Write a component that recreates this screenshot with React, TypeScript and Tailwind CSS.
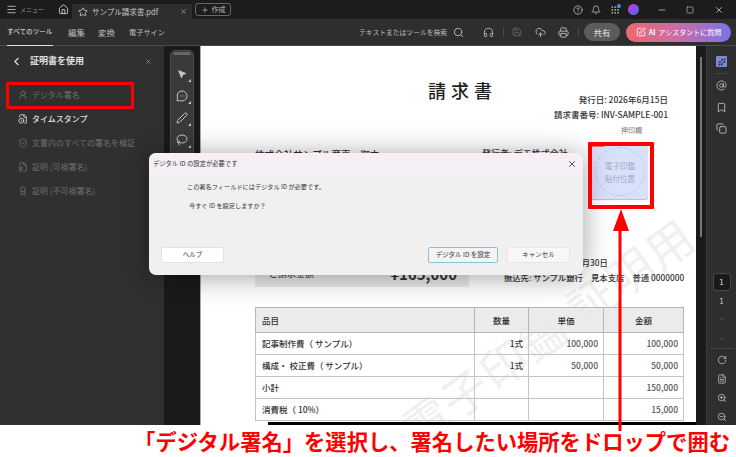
import React from 'react';
import {
  Bell, Bookmark, ChevronDown, ChevronLeft, ChevronUp, CircleHelp, Copy, FileBadge, FileClock, FileText, Grip,
  Headphones, Home, Lasso, Menu, MessageCircleMore, Minus, MousePointer2, Pen, Plus, Printer, RotateCw, Save,
  Search, ShieldCheck, Sparkles, Square, SquarePen, Star, CloudUpload, Award, AtSign, UserRound, X, ZoomIn, ZoomOut,
} from 'lucide-react';

const sidebarItems = [
  { label: 'デジタル署名', icon: UserRound, active: false },
  { label: 'タイムスタンプ', icon: FileClock, active: true },
  { label: '文書内のすべての署名を検証', icon: ShieldCheck, active: false },
  { label: '証明 (可視署名)', icon: FileBadge, active: false },
  { label: '証明 (不可視署名)', icon: Award, active: false },
];

const floatingTools = [MousePointer2, MessageCircleMore, Pen, Lasso];

const rows = [
  { name: '記事制作費（ サンプル）', qty: '1式', price: '100,000', total: '100,000' },
  { name: '構成・ 校正費（ サンプル）', qty: '1式', price: '50,000', total: '50,000' },
  { name: '小計', qty: '', price: '', total: '150,000' },
  { name: '消費税（ 10%）', qty: '', price: '', total: '15,000' },
];

const TitleBar = () => (
  <div className="flex h-[19px] shrink-0 items-end bg-[#1c1c1c] text-[#b9b9b9]">
    <div className="flex h-[19px] w-[72px] items-center">
      <Menu className="ml-[6px] h-[11px] w-[11px]" />
      <span className="ml-[3px] whitespace-nowrap text-[6px] text-[#9a9a9a]">メニュー</span>
      <Home className="ml-[14px] h-[11px] w-[11px] text-[#d0d0d0]" />
    </div>
    <div className="flex h-[15px] w-[120px] items-center bg-[#2e2e2e] text-[#c8c8c8]">
      <Star className="ml-[6px] h-[10px] w-[10px]" />
      <span className="ml-[4px] whitespace-nowrap text-[7.5px]">サンプル請求書.pdf</span>
      <X className="ml-auto mr-[5px] h-[7px] w-[7px]" />
    </div>
    <div className="mb-[3px] ml-[3px] flex h-[13px] w-[36px] items-center justify-center gap-[3px] rounded-[3px] border border-[#666] text-[7px]">
      <Plus className="h-[8px] w-[8px]" />
      作成
    </div>
    <div className="ml-auto flex h-[19px] items-center pr-[12px]">
      <CircleHelp className="h-[10px] w-[10px]" />
      <Bell className="ml-[8px] h-[10px] w-[10px]" />
      <span className="relative ml-[9px]">
        <Grip className="h-[10px] w-[10px]" />
        <span className="absolute -right-[1px] -top-[1px] h-[4px] w-[4px] rounded-full bg-[#2f8ff0]" />
      </span>
      <span className="ml-[8px] h-[11px] w-[11px] rounded-full bg-[linear-gradient(135deg,#d23ad0,#3a6cf0)]" />
      <Minus className="ml-[18px] h-[10px] w-[10px]" />
      <Square className="ml-[19px] h-[8px] w-[8px]" />
      <X className="ml-[20px] h-[10px] w-[10px]" />
    </div>
  </div>
);

const ToolBar = () => (
  <div className="flex h-[27px] shrink-0 items-center whitespace-nowrap border-b border-[#4a4a4a] bg-[#2e2e2e] text-[8.5px] text-[#bdbdbd]">
    <div className="relative ml-[7px] flex h-full w-[46px] items-center text-[6.6px] text-[#e8e8e8]">
      すべてのツール
      <span className="absolute bottom-[-1px] left-0 right-0 h-[1px] bg-[#e0e0e0]" />
    </div>
    <span className="ml-[15px] w-[17px]">編集</span>
    <span className="ml-[13px] w-[17px]">変換</span>
    <span className="ml-[14px] w-[36px] text-[7.2px]">電子サイン</span>
    <span className="ml-[194px] w-[89px] text-[6.8px]">テキストまたはツールを検索</span>
    <Search className="ml-[5px] h-[11px] w-[11px]" />
    <Headphones className="ml-[19px] h-[11px] w-[11px]" />
    <span className="ml-[9px] h-[10px] w-px bg-[#4a4a4a]" />
    <Save className="ml-[8px] h-[10px] w-[10px] text-[#666]" />
    <CloudUpload className="ml-[13px] h-[11px] w-[11px]" />
    <Printer className="ml-[12px] h-[11px] w-[11px]" />
    <span className="ml-[9px] h-[10px] w-px bg-[#4a4a4a]" />
    <span className="ml-[5px] flex h-[18px] w-[36px] items-center justify-center rounded-full bg-[#5c5c5c] text-[#e0e0e0]">共有</span>
    <span className="ml-[6px] flex h-[19px] w-[105px] items-center justify-center gap-[3px] rounded-full bg-[linear-gradient(90deg,#ef6670,#c86ea8,#7a72e6)] text-[7px] text-white">
      <SquarePen className="h-[10px] w-[10px]" />
      <b>AI</b> アシスタントに質問
    </span>
  </div>
);

const Sidebar = () => (
  <aside className="flex w-[164px] shrink-0 flex-col bg-[#303030]">
    <div className="flex h-[30px] shrink-0 items-center text-[#e2e2e2]">
      <ChevronLeft className="ml-[10px] h-[13px] w-[13px]" />
      <span className="ml-[7px] text-[9px] font-bold">証明書を使用</span>
      <X className="ml-auto mr-[12px] h-[7px] w-[7px] text-[#aaa]" />
    </div>
    <ul className="mt-[7px] flex flex-col">
      {sidebarItems.map(({ label, icon: Icon, active }) => (
        <li
          key={label}
          className={`flex h-[24px] items-center whitespace-nowrap pl-[18px] text-[8px] ${active ? 'font-medium text-[#dcdcdc]' : 'text-[#6e6e6e]'}`}
        >
          <Icon className="h-[10px] w-[10px] shrink-0" />
          <span className="ml-[4px]">{label}</span>
        </li>
      ))}
    </ul>
  </aside>
);

const FloatingTools = () => (
  <div className="flex w-[36px] shrink-0 justify-center bg-[#1a1a1a] pt-[4px]">
    <div className="flex h-[180px] w-[24px] flex-col items-center gap-[10px] rounded-[5px] border border-[#4c4c4c] bg-[#3a3a3a] pt-[1px] text-[#c9c9c9]">
      <span className="mb-[3px] h-[3px] w-[18px] rounded-sm bg-[#666]" />
      {floatingTools.map((Icon, i) => (
        <span key={i} className="relative flex h-[12px] w-[12px] items-center justify-center">
          <Icon className={i === 0 ? 'h-[10px] w-[10px] fill-[#c9c9c9]' : 'h-[12px] w-[12px]'} />
          <span className="absolute -bottom-[2px] -right-[3px] h-0 w-0 border-b-[3px] border-l-[3px] border-b-[#c9c9c9] border-l-transparent" />
        </span>
      ))}
    </div>
  </div>
);

const RightRail = () => (
  <div className="flex w-[30px] shrink-0 flex-col items-center border-l border-[#3c3c3c] bg-[#2e2e2e] text-[#b8b8b8]">
    <span className="mt-[10px] flex h-[11px] w-[11px] items-center justify-center rounded-[1px] bg-[#7f89d8]">
      <Sparkles className="h-[8px] w-[8px] text-[#20243c]" />
    </span>
    <span className="mt-[6px] h-px w-[14px] bg-[#444]" />
    <AtSign className="mt-[6px] h-[11px] w-[11px]" />
    <Bookmark className="mt-[11px] h-[11px] w-[11px]" />
    <Copy className="mt-[10px] h-[11px] w-[11px]" />
    <span className="mt-[139px] flex h-[18px] w-[18px] items-center justify-center rounded-[3px] border border-[#4a4a4a] bg-[#1a1a1a] text-[8px] text-[#ddd]">1</span>
    <span className="mt-[4px] text-[8px] leading-[12px] text-[#ccc]">1</span>
    <ChevronUp className="mt-[8px] h-[8px] w-[8px] text-[#666]" />
    <ChevronDown className="mt-[12px] h-[8px] w-[8px] text-[#666]" />
    <span className="mt-[5px] h-px w-[24px] bg-[#444]" />
    <RotateCw className="mt-[6px] h-[10px] w-[10px]" />
    <FileText className="mt-[9px] h-[10px] w-[10px]" />
    <ZoomIn className="mt-[9px] h-[10px] w-[10px]" />
    <ZoomOut className="mt-[9px] h-[10px] w-[10px]" />
  </div>
);

const Watermark = () => (
  <div className="absolute left-[172px] top-[250px] origin-center -rotate-[36deg] whitespace-nowrap text-[46px] tracking-[2px] text-[#f0f0f0]">
    電子印鑑 証明用
  </div>
);

const Invoice = () => (
  <div className="relative flex-1 overflow-hidden border-l border-[#aaa] bg-white pl-[54px] pr-[12px] pt-[34px] text-[#333]">
    <Watermark />
    <div className="relative grid">
      <h1 className="col-start-1 row-start-1 justify-self-center pr-[14px] text-[18px] font-medium leading-[20px] tracking-[5px] text-[#222]">請求書</h1>
      <div className="col-start-1 row-start-1 mt-[12px] justify-self-end pr-[16px] text-right text-[8.5px] font-medium leading-[15px]">
        <p>発行日:  2026年6月15日</p>
        <p>請求書番号:  INV-SAMPLE-001</p>
        <p className="mr-[26px] mt-[2px] text-[7px] font-normal leading-[12px] text-[#777]">押印欄</p>
      </div>
    </div>

    <div className="relative flex h-[125px]">
      <div className="w-[227px] shrink-0 pt-[11px] text-[9.6px] font-medium leading-[14px]">株式会社サンプル商事　御中</div>
      <div className="w-[110px] shrink-0 whitespace-nowrap pt-[11px] text-[9px] font-medium leading-[14px]">
        発行者: デモ株式会社
        <p className="mt-[4px] pl-[64px] text-[7px] font-normal text-[#888]">TEL:DD-1</p>
      </div>
      <div className="relative mt-[8px] flex h-[55px] w-[56px] shrink-0 flex-col items-center justify-center rounded-br-[3px] bg-[#d9e0fa] text-[7.5px] leading-[13px] text-[#a4a9be] shadow-[0_1px_1px_#bbb]">
        <span className="absolute left-0 top-0 h-[3px] w-[12px] bg-[#e8705a]" />
        <span className="absolute inset-[3px] rounded-full border border-dashed border-[#c0c7e2]" />
        <span>電子印鑑</span>
        <span>貼付位置</span>
      </div>
    </div>

    <div className="relative flex">
      <div className="flex h-[26px] w-[214px] shrink-0 items-center justify-between bg-[#ececec] pl-[14px] pr-[12px]">
        <span className="text-[9px]">ご請求金額</span>
        <span className="text-[15px] font-bold">¥165,000</span>
      </div>
      <div className="ml-[35px] whitespace-nowrap text-[8.3px] font-medium leading-[15px]">
        <p className="-mt-[6px]">お支払期限:  2026年6月30日</p>
        <p>振込先:  サンプル銀行　見本支店　普通 0000000</p>
      </div>
    </div>

    <table className="relative mt-[20px] w-[429px] table-fixed border-collapse text-[8.5px] font-medium">
      <thead>
        <tr className="h-[25px] bg-[#e9e9e9]/90">
          <th className="w-[219px] border border-[#b5b5b5] pl-[6px] text-left font-medium">品目</th>
          <th className="w-[54px] border border-[#b5b5b5] font-medium">数量</th>
          <th className="w-[75px] border border-[#b5b5b5] font-medium">単価</th>
          <th className="border border-[#b5b5b5] font-medium">金額</th>
        </tr>
      </thead>
      <tbody>
        {rows.map((row) => (
          <tr key={row.name} className="h-[22px]">
            <td className="border border-[#c4c4c4] pl-[6px]">{row.name}</td>
            <td className="border border-[#c4c4c4] pr-[5px] text-right">{row.qty}</td>
            <td className="border border-[#c4c4c4] pr-[5px] text-right text-[#555]">{row.price}</td>
            <td className="border border-[#c4c4c4] pr-[5px] text-right text-[#555]">{row.total}</td>
          </tr>
        ))}
      </tbody>
    </table>
    <span className="absolute bottom-0 left-[67px] right-0 h-[3px] bg-black" />
  </div>
);

const SignatureDialog = () => (
  <div className="absolute left-[149px] top-[153px] flex h-[122px] w-[434px] flex-col rounded-[7px] bg-[#f0f0f0] text-[#333] shadow-[0_2px_28px_rgba(0,0,0,0.38)]">
    <div className="flex h-[22px] shrink-0 items-center justify-between rounded-t-[7px] bg-[#f6eff6] pl-[4px] pr-[6px] text-[6.3px]">
      デジタル ID の設定が必要です
      <X className="h-[10px] w-[10px]" />
    </div>
    <div className="pl-[38px] pt-[6px] text-[6.2px] leading-[11px]">
      <p>この署名フィールドにはデジタル ID が必要です。</p>
      <p className="ml-[2px] mt-[8px]">今すぐ ID を設定しますか？</p>
    </div>
    <div className="mt-auto flex gap-[9px] pb-[12px] pl-[12px] pr-[13px] text-[6.5px]">
      <button className="mr-auto h-[16px] w-[63px] rounded-[2px] border border-[#e2e2e2] bg-white">ヘルプ</button>
      <button className="h-[16px] w-[70px] whitespace-nowrap rounded-[2px] border border-[#8cc0d8] bg-[#f4f4f4]">デジタル ID を設定</button>
      <button className="h-[16px] w-[63px] rounded-[2px] border border-[#e6e6e6] bg-[#f8f8f8]">キャンセル</button>
    </div>
  </div>
);

export default function App() {
  return (
    <div className="relative flex h-[457px] w-[736px] flex-col overflow-hidden bg-white font-['Noto_Sans_CJK_JP','Noto_Sans',sans-serif]">
      <div className="flex h-[425px] shrink-0 flex-col">
        <TitleBar />
        <ToolBar />
        <div className="flex min-h-0 flex-1">
          <Sidebar />
          <FloatingTools />
          <Invoice />
          <div className="relative w-[10px] shrink-0 bg-[#1a1a1a]">
            <span className="absolute left-[4px] top-[11px] h-[180px] w-[2px] bg-[#777]" />
          </div>
          <RightRail />
        </div>
      </div>
      <p className="flex flex-1 items-center justify-end whitespace-nowrap pr-[6px] text-[21.3px] font-bold leading-none text-[#f00]">
        「デジタル署名」を選択し、署名したい場所をドロップで囲む
      </p>

      <SignatureDialog />

      {/* callouts drawn over the screenshot */}
      <span className="absolute left-[6px] top-[82px] h-[27px] w-[128px] rounded-[1px] border-[3px] border-[#f00]" />
      <span className="absolute left-[588px] top-[142px] h-[67px] w-[66px] rounded-[1px] border-[4px] border-[#f00]" />
      <svg className="absolute left-[610px] top-[205px]" width="22" height="228" viewBox="0 0 22 228">
        <path d="M10 20V226" stroke="#f00" strokeWidth="3" />
        <path d="M11 4 19 26H3Z" fill="#f00" />
      </svg>
    </div>
  );
}
